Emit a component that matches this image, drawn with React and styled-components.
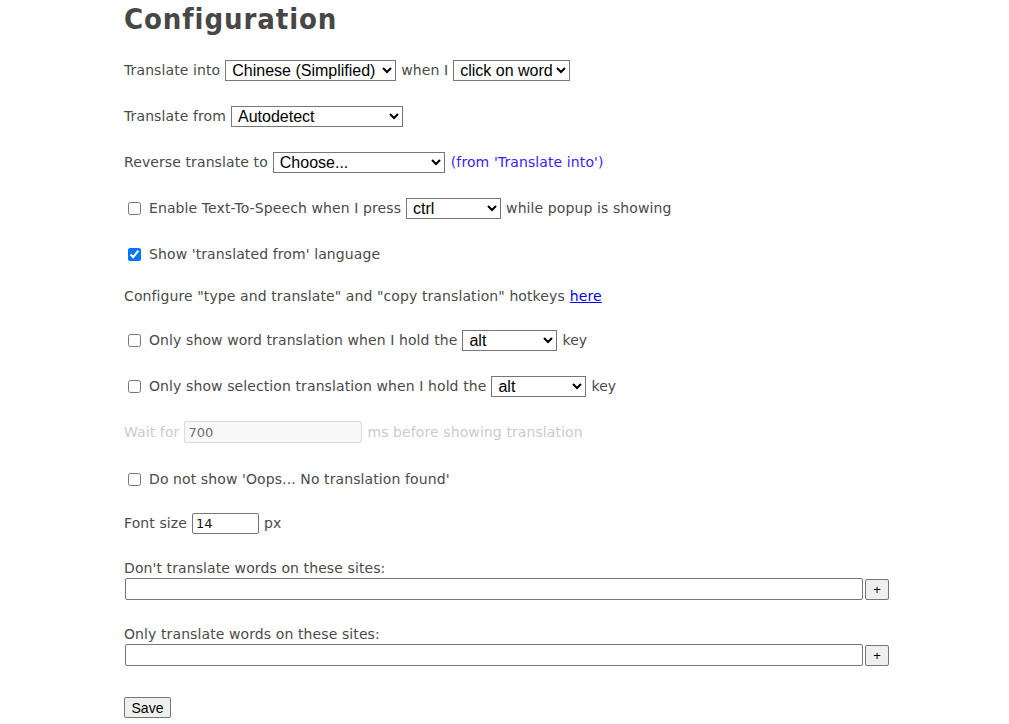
import React from "react";
import styled, { createGlobalStyle } from "styled-components";

const GlobalStyle = createGlobalStyle`
  html, body {
    margin: 0;
    padding: 0;
    background: #fff;
  }
  body {
    font-family: "DejaVu Sans", Verdana, sans-serif;
    font-size: 14px;
    color: #4a4a4a;
  }
`;

const Page = styled.div`
  padding: 0 120px 0 124px;
`;

const Title = styled.h1`
  font-family: "DejaVu Sans Condensed", "DejaVu Sans", sans-serif;
  font-weight: bold;
  font-size: 29px;
  letter-spacing: 0.9px;
  color: #474747;
  margin: 0;
  padding-top: 2px;
  height: 57px;
`;

const Row = styled.div`
  display: flex;
  align-items: center;
  height: 22px;
  margin-bottom: ${(p) => p.$mb ?? 24}px;
  white-space: nowrap;
  letter-spacing: 0.1px;
  color: ${(p) => (p.$disabled ? "#cbcbcb" : "#4a4a4a")};
`;

const Check = styled.input.attrs({ type: "checkbox" })`
  width: 13px;
  height: 13px;
  margin: 0 8px 0 4px;
  accent-color: #0075ff;
`;

const Select = styled.select`
  font-family: "Liberation Sans", Arial, sans-serif;
  font-size: 16px;
  letter-spacing: 0;
  color: #000;
  width: ${(p) => p.$w}px;
  height: 21px;
  padding: 0 0 0 2px;
  margin: 0 5px;
  border: 1px solid #767676;
  border-radius: 0;
  background: #fff;
`;

const TextInput = styled.input`
  font-family: "DejaVu Sans", Verdana, sans-serif;
  font-size: 13px;
  letter-spacing: 0;
  color: #111;
  width: ${(p) => p.$w}px;
  height: ${(p) => p.$h ?? 21}px;
  box-sizing: border-box;
  padding: 0 3px;
  margin: 0 5px;
  border: 1px solid #767676;
  border-radius: 2px;

  &:disabled {
    background: #f8f8f8;
    border-color: #dcdcdc;
    color: #6d6d6d;
  }
`;

const Hint = styled.span`
  color: #3a1cff;
  margin-left: 1px;
`;

const Link = styled.a`
  color: #0000ee;
  text-decoration: underline;
  margin-left: 5px;
`;

const Label = styled.div`
  height: 17px;
  line-height: 17px;
  letter-spacing: 0.1px;
  margin-bottom: 1px;
`;

const SiteRow = styled.div`
  display: flex;
  align-items: center;
  gap: 2px;
  margin-bottom: ${(p) => p.$mb}px;
`;

const SiteInput = styled.input`
  width: 738px;
  height: 22px;
  box-sizing: border-box;
  margin: 0 0 0 1px;
  border: 1px solid #767676;
  border-radius: 2px;
`;

const Button = styled.button`
  font-family: "Liberation Sans", Arial, sans-serif;
  font-size: 13px;
  color: #000;
  background: #efefef;
  border: 1px solid #767676;
  border-radius: 2px;
  width: ${(p) => p.$w}px;
  height: 21px;
  padding: 0;
`;

const SaveButton = styled(Button)`
  font-size: 14px;
`;

const App = () => {
  return (
    <>
      <GlobalStyle />
      <Page>
        <Title>Configuration</Title>

        <Row>
          Translate into
          <Select $w={171} defaultValue="zh">
            <option value="zh">Chinese (Simplified)</option>
          </Select>
          when I
          <Select $w={117} defaultValue="click">
            <option value="click">click on word</option>
          </Select>
        </Row>

        <Row>
          Translate from
          <Select $w={172}>
            <option>Autodetect</option>
          </Select>
        </Row>

        <Row>
          Reverse translate to
          <Select $w={172}>
            <option>Choose...</option>
          </Select>
          <Hint>(from 'Translate into')</Hint>
        </Row>

        <Row>
          <Check />
          Enable Text-To-Speech when I press
          <Select $w={95}>
            <option>ctrl</option>
          </Select>
          while popup is showing
        </Row>

        <Row $mb={20}>
          <Check defaultChecked />
          Show 'translated from' language
        </Row>

        <Row $mb={22}>
          Configure "type and translate" and "copy translation" hotkeys
          <Link href="#">here</Link>
        </Row>

        <Row>
          <Check />
          Only show word translation when I hold the
          <Select $w={95}>
            <option>alt</option>
          </Select>
          key
        </Row>

        <Row>
          <Check />
          Only show selection translation when I hold the
          <Select $w={95}>
            <option>alt</option>
          </Select>
          key
        </Row>

        <Row $mb={25} $disabled>
          Wait for
          <TextInput $w={178} $h={22} defaultValue="700" disabled />
          ms before showing translation
        </Row>

        <Row $mb={22}>
          <Check />
          Do not show 'Oops... No translation found'
        </Row>

        <Row $mb={26}>
          Font size
          <TextInput $w={67} defaultValue="14" />
          px
        </Row>

        <Label>Don't translate words on these sites:</Label>
        <SiteRow $mb={26}>
          <SiteInput />
          <Button $w={24}>+</Button>
        </SiteRow>

        <Label>Only translate words on these sites:</Label>
        <SiteRow $mb={31}>
          <SiteInput />
          <Button $w={24}>+</Button>
        </SiteRow>

        <SaveButton $w={47}>Save</SaveButton>
      </Page>
    </>
  );
};

export default App;
